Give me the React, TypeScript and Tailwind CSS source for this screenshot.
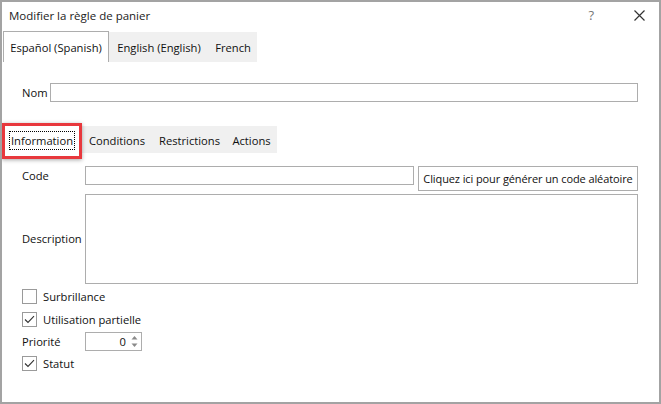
import React from "react";

function Check({ checked }: { checked: boolean }) {
  return (
    <div className="w-[15px] h-[15px] border border-[#9a9a9a] bg-white flex items-center justify-center shrink-0">
      {checked && (
        <svg width="11" height="9" viewBox="0 0 11 9">
          <path d="M1 4.5 L4 7.5 L10 1.2" fill="none" stroke="#333" strokeWidth="1.1" />
        </svg>
      )}
    </div>
  );
}

export default function App() {
  return (
    <div className="w-[661px] h-[404px] bg-white border-2 border-[#a3a3a3] relative flex flex-col font-['Open_Sans',sans-serif] text-[11.2px] text-[#111] leading-none overflow-hidden">
      {/* title bar */}
      <div className="h-[27px] flex items-center pl-[7px] shrink-0">
        <span className="text-[#222] text-[11.5px]">Modifier la règle de panier</span>
        <span className="ml-auto text-[#777] text-[13px] mr-[40px]">?</span>
        <svg className="mr-[14px]" width="11" height="11" viewBox="0 0 11 11">
          <path d="M0.5 0.5 L10.5 10.5 M10.5 0.5 L0.5 10.5" stroke="#333" strokeWidth="1.2" />
        </svg>
      </div>
      {/* language tabs */}
      <div className="flex ml-[1px] mt-[2px] h-[31px] shrink-0">
        <div className="w-[106px] border border-b-0 border-[#adadad] bg-white flex items-center justify-center pt-[2px]">Español (Spanish)</div>
        <div className="w-[100px] bg-[#f0f0f0] flex items-center justify-center pt-[2px] mt-[1px]">English (English)</div>
        <div className="w-[48px] bg-[#f0f0f0] flex items-center justify-center pt-[2px] mt-[1px]">French</div>
      </div>
      {/* Nom */}
      <div className="flex items-center pl-[20px] pr-[21px] mt-[21px] h-[19px] shrink-0">
        <span className="w-[28px]">Nom</span>
        <div className="flex-1 h-[19px] border border-[#adadad]" />
      </div>
      {/* second tabs */}
      <div className="flex ml-[1px] mt-[24px] h-[27px] shrink-0">
        <div className="w-[78px] bg-white flex items-center justify-center pt-[2px]">
          <span className="border border-dotted border-black px-[1px] py-[3px]">Information</span>
        </div>
        <div className="w-[72px] bg-[#f0f0f0] flex items-center justify-center pt-[3px]">Conditions</div>
        <div className="w-[73px] bg-[#f0f0f0] flex items-center justify-center pt-[3px]">Restrictions</div>
        <div className="w-[51px] bg-[#f0f0f0] flex items-center justify-center pt-[3px]">Actions</div>
      </div>
      {/* Code */}
      <div className="flex items-start pl-[20px] pr-[21px] mt-[13px] h-[25px] shrink-0">
        <span className="w-[63px] h-[19px] flex items-center">Code</span>
        <div className="w-[329px] h-[19px] border border-[#adadad]" />
        <div className="ml-[4px] flex-1 h-[25px] border border-[#adadad] flex items-center justify-center whitespace-nowrap overflow-hidden text-[11px] tracking-[-0.1px]">
          Cliquez ici pour générer un code aléatoire
        </div>
      </div>
      {/* Description */}
      <div className="flex items-center pl-[20px] pr-[21px] mt-[3px] h-[90px] shrink-0">
        <span className="w-[63px]">Description</span>
        <div className="flex-1 h-[90px] border border-[#adadad]" />
      </div>
      {/* checkboxes */}
      <div className="flex items-center pl-[20px] mt-[5px] h-[15px] gap-[6px] shrink-0">
        <Check checked={false} />
        <span>Surbrillance</span>
      </div>
      <div className="flex items-center pl-[20px] mt-[8px] h-[15px] gap-[6px] shrink-0">
        <Check checked={true} />
        <span>Utilisation partielle</span>
      </div>
      <div className="flex items-center pl-[20px] mt-[5px] h-[19px] shrink-0">
        <span className="w-[63px]">Priorité</span>
        <div className="w-[57px] h-[19px] border border-[#adadad] flex items-center justify-end pr-[3px]">
          <span className="mr-[5px]">0</span>
          <svg width="7" height="13" viewBox="0 0 7 13">
            <path d="M0.5 4.5 L3.5 1 L6.5 4.5 Z" fill="#8a8a8a" />
            <path d="M0.5 8.5 L3.5 12 L6.5 8.5 Z" fill="#8a8a8a" />
          </svg>
        </div>
      </div>
      <div className="flex items-center pl-[20px] mt-[5px] h-[15px] gap-[6px] shrink-0">
        <Check checked={true} />
        <span>Statut</span>
      </div>
      {/* red highlight annotation */}
      <div className="absolute left-0 top-[121px] w-[80px] h-[36px] border-[3px] border-[#e8383d] shadow-[0_1px_4px_rgba(0,0,0,0.35)]" />
    </div>
  );
}
